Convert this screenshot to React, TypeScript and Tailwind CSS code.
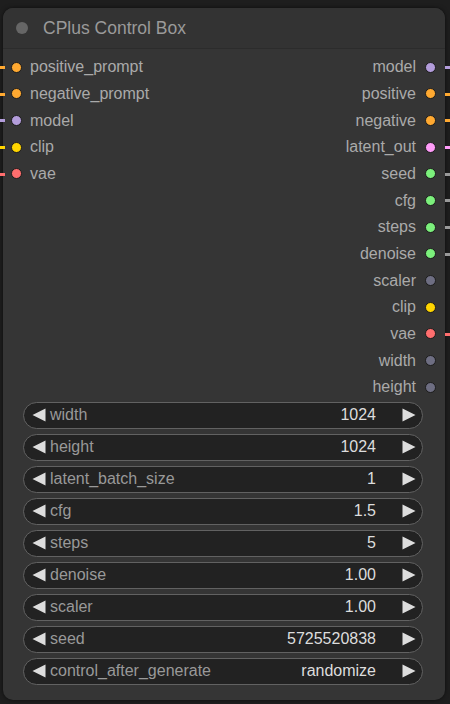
const FONT = "font-['Liberation_Sans','Arial',sans-serif]";

type Slot = { name: string; color: string; wire?: string };

const inputs: Slot[] = [
  { name: "positive_prompt", color: "bg-[#ffa931]", wire: "bg-[#ffa931]" },
  { name: "negative_prompt", color: "bg-[#ffa931]", wire: "bg-[#ffa931]" },
  { name: "model", color: "bg-[#b39ddb]", wire: "bg-[#b39ddb]" },
  { name: "clip", color: "bg-[#ffd500]", wire: "bg-[#ffd500]" },
  { name: "vae", color: "bg-[#ff6e6e]", wire: "bg-[#ff6e6e]" },
];

const outputs: Slot[] = [
  { name: "model", color: "bg-[#b39ddb]", wire: "bg-[#b39ddb]" },
  { name: "positive", color: "bg-[#ffa931]", wire: "bg-[#ffa931]" },
  { name: "negative", color: "bg-[#ffa931]", wire: "bg-[#ffa931]" },
  { name: "latent_out", color: "bg-[#ff9cf9]", wire: "bg-[#ff9cf9]" },
  { name: "seed", color: "bg-[#7cf07c]", wire: "bg-[#9a9a9a]" },
  { name: "cfg", color: "bg-[#7cf07c]", wire: "bg-[#9a9a9a]" },
  { name: "steps", color: "bg-[#7cf07c]", wire: "bg-[#9a9a9a]" },
  { name: "denoise", color: "bg-[#7cf07c]", wire: "bg-[#9a9a9a]" },
  { name: "scaler", color: "bg-[#6e6e82]" },
  { name: "clip", color: "bg-[#ffd500]" },
  { name: "vae", color: "bg-[#ff6e6e]", wire: "bg-[#ff6e6e]" },
  { name: "width", color: "bg-[#6e6e82]" },
  { name: "height", color: "bg-[#6e6e82]" },
];

const widgets = [
  { label: "width", value: "1024" },
  { label: "height", value: "1024" },
  { label: "latent_batch_size", value: "1" },
  { label: "cfg", value: "1.5" },
  { label: "steps", value: "5" },
  { label: "denoise", value: "1.00" },
  { label: "scaler", value: "1.00" },
  { label: "seed", value: "5725520838" },
  { label: "control_after_generate", value: "randomize" },
];

function Dot({ color }: { color: string }) {
  return (
    <span
      className={`block w-[11px] h-[11px] rounded-full border border-[#1c1c1c] ${color}`}
    />
  );
}

function Arrow({ dir }: { dir: "left" | "right" }) {
  return (
    <svg width="14" height="14" viewBox="0 0 14 14" className="shrink-0">
      {dir === "left" ? (
        <polygon points="13.5,0.5 13.5,13.5 0.5,7" fill="#dddddd" />
      ) : (
        <polygon points="0.5,0.5 0.5,13.5 13.5,7" fill="#dddddd" />
      )}
    </svg>
  );
}

export default function App() {
  return (
    <div className={`w-[450px] h-[704px] bg-[#1e1e1e] pt-[8px] pl-[3px] ${FONT}`}>
      <div className="relative w-[442px] h-[692px] rounded-[10px] bg-[#353535] shadow-[0_0_4px_rgba(0,0,0,0.6)]">
        {/* title */}
        <div className="h-[41px] flex items-center rounded-t-[10px] bg-[#333333] border-b border-[#2c2c2c]">
          <span className="ml-[13px] w-[12px] h-[12px] rounded-full bg-[#666666]" />
          <span className="ml-[15px] text-[17.5px] text-[#9a9a9a]">CPlus Control Box</span>
        </div>

        {/* slots */}
        <div className="flex justify-between pt-[5px]">
          <div className="flex flex-col">
            {inputs.map((s) => (
              <div key={s.name} className="relative h-[26.67px] flex items-center pl-[8px]">
                {s.wire && (
                  <span className={`absolute -left-[4px] top-[12px] w-[6px] h-[3px] ${s.wire}`} />
                )}
                <Dot color={s.color} />
                <span className="ml-[8px] text-[16px] text-[#aaaaaa]">{s.name}</span>
              </div>
            ))}
          </div>
          <div className="flex flex-col items-end">
            {outputs.map((s, i) => (
              <div key={s.name + i} className="relative h-[26.67px] flex items-center pr-[9px]">
                <span className="mr-[9px] text-[16px] text-[#aaaaaa]">{s.name}</span>
                <Dot color={s.color} />
                {s.wire && (
                  <span className={`absolute -right-[6px] top-[12px] w-[6px] h-[3px] ${s.wire}`} />
                )}
              </div>
            ))}
          </div>
        </div>

        {/* widgets */}
        <div className="flex flex-col gap-[5.5px] pl-[20px] pr-[22px] pt-[1.5px]">
          {widgets.map((w) => (
            <div
              key={w.label}
              className="h-[26.5px] flex items-center rounded-full bg-[#222222] border border-[#626262] pl-[8px] pr-[6px]"
            >
              <Arrow dir="left" />
              <span className="ml-[4px] flex-1 text-[16px] text-[#999999]">{w.label}</span>
              <span className="mr-[26px] text-[16px] text-[#dddddd]">{w.value}</span>
              <Arrow dir="right" />
            </div>
          ))}
        </div>
      </div>
    </div>
  );
}
